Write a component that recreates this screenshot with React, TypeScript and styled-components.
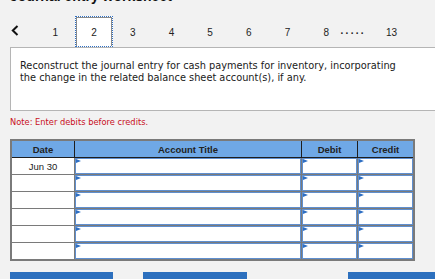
import * as React from 'react'
import styled, { createGlobalStyle } from 'styled-components'

const GlobalStyle = createGlobalStyle`
    html, body {
        margin: 0;
        padding: 0;
        overflow: hidden;
        background: #f2f2f2;
    }
    *, *::before, *::after {
        box-sizing: border-box;
    }
`

const tabs = ['1', '2', '3', '4', '5', '6', '7', '8']
const rows = ['Jun 30', '', '', '', '', '']

const App: React.FC = () => (
    <Page>
        <GlobalStyle />
        <Title>Journal entry worksheet</Title>
        <TabBar>
            <Prev>
                <svg width="8" height="11" viewBox="0 0 8 11">
                    <polyline points="6.5,1 1.8,5.5 6.5,10" fill="none" stroke="#111" strokeWidth="2" />
                </svg>
            </Prev>
            {tabs.map(t => (
                <Tab key={t} active={t === '2'}>{t}</Tab>
            ))}
            <Dots>.....</Dots>
            <LastTab>13</LastTab>
        </TabBar>
        <Prompt>
            Reconstruct the journal entry for cash payments for inventory, incorporating
            <br />
            the change in the related balance sheet account(s), if any.
        </Prompt>
        <Note>Note: Enter debits before credits.</Note>
        <Table>
            <HeadRow>
                <HeadCell>Date</HeadCell>
                <HeadCell>Account Title</HeadCell>
                <HeadCell>Debit</HeadCell>
                <HeadCell>Credit</HeadCell>
            </HeadRow>
            {rows.map((d, i) => (
                <BodyRow key={i}>
                    <DateCell>{d}</DateCell>
                    <InputCell><Marker /></InputCell>
                    <InputCell><Marker /></InputCell>
                    <InputCell><Marker /></InputCell>
                </BodyRow>
            ))}
        </Table>
        <Buttons>
            <Button width={103} />
            <Button width={104} />
            <Button width={100} offset={71} />
        </Buttons>
    </Page>
)

const Page = styled.div`
    padding-left: 10px;
    font-family: "Liberation Sans", Arial, sans-serif;
    color: #222;
`

const Title = styled.h1`
    margin: -12px 0 0 0;
    font-size: 14px;
    line-height: 16px;
    font-weight: bold;
    color: #111;
`

const TabBar = styled.div`
    display: flex;
    align-items: stretch;
    height: 31px;
    margin-top: 12px;
    font-size: 10px;
`

const Prev = styled.div`
    width: 26px;
    display: flex;
    align-items: center;
    padding-left: 1px;
    padding-bottom: 2px;
`

const Tab = styled.div<{ active?: boolean }>`
    width: 38.7px;
    display: flex;
    align-items: center;
    justify-content: center;
    padding-top: 1px;
    background: ${p => (p.active ? '#fff' : 'transparent')};
    border: 1px dotted ${p => (p.active ? '#2f70c4' : 'transparent')};
    box-shadow: ${p => (p.active ? 'inset 1px 1px 0 #8a8a8a, inset -1px 0 0 #8a8a8a' : 'none')};
`

const Dots = styled.div`
    margin-left: -5px;
    width: 32px;
    display: flex;
    align-items: center;
    padding-bottom: 3px;
    font-weight: bold;
    letter-spacing: 2.3px;
`

const LastTab = styled(Tab)`
    width: 38px;
`

const Prompt = styled.div`
    width: 440px;
    height: 64px;
    background: #fff;
    border: 1px solid #b5b5b5;
    border-right: none;
    padding: 12px 9px;
    font-family: "DejaVu Sans", Verdana, sans-serif;
    font-size: 9.8px;
    line-height: 12px;
    color: #1a1a1a;
`

const Note = styled.div`
    margin-top: 5px;
    font-family: "DejaVu Sans", Verdana, sans-serif;
    font-size: 8.3px;
    line-height: 12px;
    color: #c8101e;
`

const Table = styled.div`
    width: 405px;
    margin-top: 11px;
    border: 2px solid #7a7a7a;
    background: #7a7a7a;
`

const HeadRow = styled.div`
    display: grid;
    grid-template-columns: 62px 226px 55px 55px;
    column-gap: 1px;
    padding-bottom: 1px;
    background: #1e1e1e;
`

const HeadCell = styled.div`
    height: 16px;
    background: #6fa8e6;
    display: flex;
    align-items: center;
    justify-content: center;
    font-size: 9.5px;
    font-weight: bold;
    color: #222;
`

const BodyRow = styled.div`
    display: grid;
    grid-template-columns: 62px 226px 55px 55px;
    column-gap: 1px;
    padding-bottom: 1px;
    &:last-child {
        padding-bottom: 0;
    }
`

const DateCell = styled.div`
    height: 16px;
    background: #fff;
    display: flex;
    align-items: center;
    justify-content: center;
    font-size: 9.5px;
    color: #222;
`

const InputCell = styled.div`
    position: relative;
    height: 16px;
    background: #fff;
    border: 1px solid #5f8fcf;
`

const Marker = styled.span`
    position: absolute;
    left: 0;
    top: 0;
    width: 0;
    height: 0;
    border-top: 2px solid transparent;
    border-bottom: 2px solid transparent;
    border-left: 5px solid #2d6ec3;
`

const Buttons = styled.div`
    display: flex;
    gap: 30px;
    width: 440px;
    margin-top: 11px;
`

const Button = styled.div<{ width: number; offset?: number }>`
    width: ${p => p.width}px;
    height: 20px;
    margin-left: ${p => p.offset ?? 0}px;
    background: #2d70be;
`

export default App
